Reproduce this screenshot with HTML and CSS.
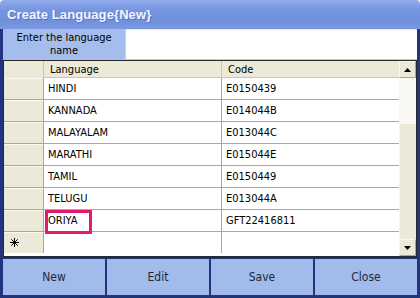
FILE: index.html
```html
<!DOCTYPE html>
<html>
<head>
<meta charset="utf-8">
<link rel="stylesheet" href="styles.css">
</head>
<body>
<div class="window">
  <div class="titlebar">Create Language{New}</div>
  <div class="frame">
    <div class="namerow">
      <div class="label">Enter the language<br>name</div>
      <div class="input"></div>
    </div>
    <div class="grid">
      <div class="table">
        <div class="row head"><div class="rh"></div><div class="c1">Language</div><div class="c2">Code</div></div>
        <div class="row"><div class="rh"></div><div class="c1">HINDI</div><div class="c2">E0150439</div></div>
        <div class="row"><div class="rh"></div><div class="c1">KANNADA</div><div class="c2">E014044B</div></div>
        <div class="row"><div class="rh"></div><div class="c1">MALAYALAM</div><div class="c2">E013044C</div></div>
        <div class="row"><div class="rh"></div><div class="c1">MARATHI</div><div class="c2">E015044E</div></div>
        <div class="row"><div class="rh"></div><div class="c1">TAMIL</div><div class="c2">E0150449</div></div>
        <div class="row"><div class="rh"></div><div class="c1">TELUGU</div><div class="c2">E013044A</div></div>
        <div class="row"><div class="rh"></div><div class="c1 mark">ORIYA</div><div class="c2">GFT22416811</div></div>
        <div class="row last"><div class="rh star"><svg width="9" height="9" viewBox="0 0 9 9"><path d="M4.5 0 V9 M0 4.5 H9 M1.3 1.3 L7.7 7.7 M7.7 1.3 L1.3 7.7" stroke="#000" stroke-width="1" fill="none"/></svg></div><div class="c1"></div><div class="c2"></div></div>
      </div>
      <div class="scrollbar">
        <div class="sbtn"><svg width="7" height="4" viewBox="0 0 7 4"><path d="M0 4 L3.5 0 L7 4 Z" fill="#000"/></svg></div>
        <div class="track"></div>
        <div class="thumb"></div>
        <div class="sbtn"><svg width="7" height="4" viewBox="0 0 7 4"><path d="M0 0 L3.5 4 L7 0 Z" fill="#000"/></svg></div>
      </div>
    </div>
    <div class="buttons">
      <div class="btn">New</div>
      <div class="btn">Edit</div>
      <div class="btn">Save</div>
      <div class="btn">Close</div>
    </div>
  </div>
</div>
</body>
</html>
```

FILE: styles.css
```css
html, body {
  margin: 0;
  padding: 0;
  background: #ffffff;
}
.window {
  width: 420px;
  height: 298px;
  display: flex;
  flex-direction: column;
  font-family: "DejaVu Sans Condensed", "DejaVu Sans", sans-serif;
  font-stretch: condensed;
  font-size: 11px;
  color: #000;
}
.titlebar {
  height: 29px;
  box-sizing: border-box;
  padding: 7px 0 0 7px;
  background: linear-gradient(to bottom, #93adee 0%, #7695e0 35%, #7090dc 70%, #7a98e2 100%);
  color: #f2f5ff;
  font-family: "Liberation Sans", sans-serif;
  font-weight: bold;
  font-size: 13px;
  letter-spacing: 0.1px;
  text-shadow: 1px 1px 0 #5a74bd;
  border-radius: 4px 4px 0 0;
}
.frame {
  flex: 1;
  display: flex;
  flex-direction: column;
  border: 3px solid #23347f;
  border-top: 0;
  background: #23347f;
}
.namerow {
  height: 31px;
  display: flex;
  background: #ffffff;
}
.label {
  width: 123px;
  background: #a5bdec;
  text-align: center;
  line-height: 13px;
  padding-top: 2px;
  box-sizing: border-box;
  border-right: 1px solid #c5d3ef;
  font-size: 11px;
}
.input {
  flex: 1;
  background: #fff;
  border-top: 1px solid #e8e8e8;
  border-bottom: 1px solid #c8c8c8;
}
.grid {
  height: 198px;
  box-sizing: border-box;
  display: flex;
  background: #fff;
  border: 1px solid #2a2a2a;
  border-bottom: 2px solid #2a2a2a;
}
.table {
  flex: 1;
  display: flex;
  flex-direction: column;
  background: #fff;
}
.row {
  height: 22px;
  box-sizing: border-box;
  display: grid;
  grid-template-columns: 40px 178px 1fr;
  border-bottom: 1px solid #a7a7a7;
}
.row.head {
  height: 17px;
  background: #ece9d8;
  border-bottom: 1px solid #c9c6b8;
}
.row.last {
  height: 21px;
  border-bottom: 0;
}
.rh {
  background: #ece9d8;
  border-right: 1px solid #a7a7a7;
  box-shadow: inset 0 1px 0 #faf9f3;
}
.head .rh {
  border-right: 1px solid #c9c6b8;
  box-shadow: none;
}
.c1, .c2 {
  padding-left: 4px;
  line-height: 21px;
  white-space: nowrap;
}
.c1 {
  border-right: 1px solid #a7a7a7;
}
.head .c1, .head .c2 {
  line-height: 18px;
  padding-left: 6px;
}
.head .c1 {
  border-right: 1px solid #c9c6b8;
}
.star {
  display: flex;
  align-items: center;
  padding-left: 6px;
}
.mark {
  position: relative;
}
.mark::after {
  content: "";
  position: absolute;
  left: 1px;
  top: 0;
  width: 47px;
  height: 24px;
  box-sizing: border-box;
  border: 3px solid #e2196d;
}
.scrollbar {
  width: 17px;
  display: flex;
  flex-direction: column;
  background: #f4f2ea;
  background-image: radial-gradient(#ffffff 0.6px, transparent 0.8px);
  background-size: 2px 2px;
}
.sbtn {
  height: 17px;
  box-sizing: border-box;
  background: #ece9d8;
  border: 1px solid #f8f7f1;
  border-right-color: #a9a698;
  border-bottom-color: #a9a698;
  display: flex;
  align-items: center;
  justify-content: center;
}
.track {
  height: 46px;
}
.thumb {
  flex: 1;
  background: #ece9d8;
  border-left: 1px solid #f8f7f1;
}
.buttons {
  flex: 1;
  display: grid;
  grid-template-columns: 1fr 1fr 1fr 1fr;
  gap: 2px;
  background: #23347f;
  padding-top: 1px;
}
.btn {
  background: #a1bbeb;
  display: flex;
  align-items: center;
  justify-content: center;
  color: #22283a;
  font-size: 12px;
}
```
